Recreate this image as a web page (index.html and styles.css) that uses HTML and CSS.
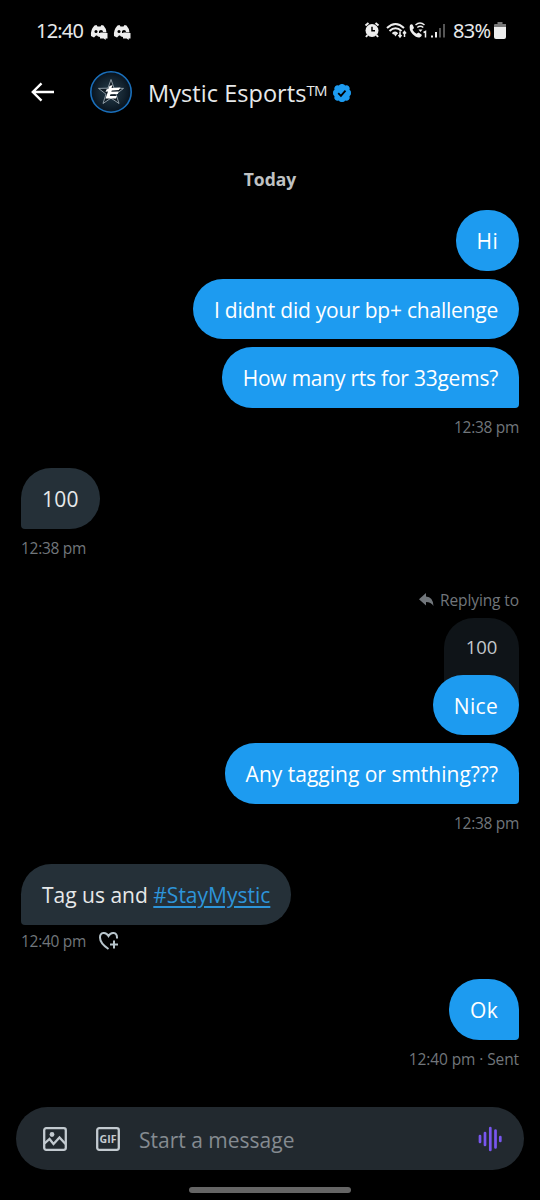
FILE: index.html
```html
<!DOCTYPE html>
<html lang="en">
<head>
<meta charset="utf-8">
<title>Mystic Esports</title>
<link rel="stylesheet" href="styles.css">
</head>
<body>
<div class="screen">
  <div class="status">
    <span class="clock">12:40</span>
    <svg class="discord" viewBox="0 0 18 16"><path d="M4.500 1.500 6.500 1l1 1.500h3L11.500 1l2 .5Q16 4 16.500 8.500H10V13l-2-.5-1-1H6L4 13.500 1 12Q.2 6 4.500 1.500Z"/><circle class="cut" cx="6" cy="7.500" r="1.500"/><path class="cut" d="M9 9V7.500Q9 6 11 6t2 2H10.300v1Z"/><path d="M10 9H17.500v5.500h-1.800v1.500L13.700 14.500H10Z"/></svg>
    <svg class="discord" viewBox="0 0 18 16"><path d="M4.500 1.500 6.500 1l1 1.500h3L11.500 1l2 .5Q16 4 16.500 8.500H10V13l-2-.5-1-1H6L4 13.500 1 12Q.2 6 4.500 1.500Z"/><circle class="cut" cx="6" cy="7.500" r="1.500"/><path class="cut" d="M9 9V7.500Q9 6 11 6t2 2H10.300v1Z"/><path d="M10 9H17.500v5.500h-1.800v1.500L13.700 14.500H10Z"/></svg>
    <svg class="signals" viewBox="0 0 84 18">
      <circle cx="8" cy="9.500" r="6.500"/><path class="line" d="M1.500 4.500 4.500 2M14.500 4.500l-3-2.500M3.500 14l-1.500 2M12.500 14l1.500 2"/><path class="hand" d="M8 5.800v4h3"/>
      <path class="line" d="M23 7q8.500-8 17 0M25.500 10q6-5.500 12 0M28.500 12.800q3-2.300 5 0"/><path d="m29.500 12.500 4 0-2 3Z"/><path class="thin" d="M36 10.500v5m-1.500-1.500 1.500 2 1.500-2M40.500 16v-5M39 12.500l1.500-2 1.500 2"/>
      <path d="M46 4q2-1.700 3 .5l1 2.500-1.500 1.700q1.200 2.500 4 4l2-1.200 3 2q1 1.500-2 3-3 .5-7-3.500-4-4.500-2.500-9Z"/><path class="thin" d="M51.500 4q4.500-4 9 0M53.300 6.500q3-2.500 6 0"/><path d="m54.500 8.500h4L56.500 11Z"/><path class="thin" d="m59.500 11.500 2-1v6"/>
      <path class="bar" d="M68 14.500v2M72 11v5.500"/><path class="bar dim" d="M76 7v9.500M80 3v13.500"/>
    </svg>
    <span class="percent">83%</span>
    <svg class="battery" viewBox="0 0 12 17"><path class="grey" d="M3.500 0h5v2H12v4H0V3q0-1 1-1h2.500Z"/><path d="M0 5h12v10q0 2-2 2H2q-2 0-2-2Z"/></svg>
  </div>
  <header class="header">
    <svg class="back" viewBox="0 0 24 20"><path d="M23 10H2M10.500 1.300 1.800 10l8.700 8.700"/></svg>
    <svg class="avatar" viewBox="0 0 42 42">
      <defs><radialGradient id="disc"><stop offset="0" stop-color="#263d4c"/><stop offset=".65" stop-color="#142430"/><stop offset="1" stop-color="#07131f"/></radialGradient></defs>
      <circle cx="21" cy="21" r="20.200" fill="url(#disc)" stroke="#1a6fbb" stroke-width="1.600"/>
      <path class="star" d="m21 8.500 3 8.700 9.500.2-7.500 5.800 3 9.300-8-5.400-8 5.400 3-9.300-7.500-5.800 9.500-.2Z"/>
      <path class="emblem" d="m19.500 15 3-1-1 3 9-.5-1.700 2.600-7 .3-.5 1.400 7.400-.4-1 2.600-7.200.3-.6 1.600 7 .1-1 2.500H15.500l2.500-7-2.500.3 1.200-2.600 1.500-.2Z"/>
    </svg>
    <h1 class="name">Mystic Esports<span class="tm">TM</span></h1>
    <svg class="verified" viewBox="0 0 20 20"><path d="M10 1a3.300 3.300 0 0 1 3.200 1.500 3.300 3.300 0 0 1 4.300 4.300A3.300 3.300 0 0 1 19 10a3.300 3.300 0 0 1-1.500 3.200 3.300 3.300 0 0 1-4.300 4.300A3.300 3.300 0 0 1 10 19a3.300 3.300 0 0 1-3.200-1.500 3.300 3.300 0 0 1-4.300-4.300A3.300 3.300 0 0 1 1 10a3.300 3.300 0 0 1 1.500-3.200 3.300 3.300 0 0 1 4.300-4.300A3.300 3.300 0 0 1 10 1Z"/><path class="check" d="m6.200 10.200 2.700 2.700 4.600-5.300"/></svg>
  </header>
  <main class="thread">
    <div class="day">Today</div>
    <section class="group sent">
      <p class="bubble short">Hi</p>
      <p class="bubble tight">I didnt did your bp+ challenge</p>
      <p class="bubble tight tail">How many rts for 33gems?</p>
      <div class="time">12:38 pm</div>
    </section>
    <section class="group received">
      <p class="bubble short tail">100</p>
      <div class="time">12:38 pm</div>
    </section>
    <section class="group sent reply-group">
      <div class="replying"><svg viewBox="0 0 15 14"><path d="M7 0v3.500q7 .3 7.500 9.500-2.500-4-7.500-4v3.500L0 6.200Z"/></svg><span>Replying to</span></div>
      <div class="quote">100</div>
      <p class="bubble short after-quote">Nice</p>
      <p class="bubble tail">Any tagging or smthing???</p>
      <div class="time">12:38 pm</div>
    </section>
    <section class="group received">
      <p class="bubble tail">Tag us and <a class="hashtag">#StayMystic</a></p>
      <div class="time compact"><span>12:40 pm</span><svg class="react" viewBox="0 0 22 20"><path d="M10.500 18C6 15 2 11 2 6.500 2 1 8 .5 10.500 5 13 .5 19 1 19 6.500v1M16 9.500v8M12 13.500h8"/></svg></div>
    </section>
    <section class="group sent">
      <p class="bubble short tail">Ok</p>
      <div class="time delivery">12:40 pm · Sent</div>
    </section>
  </main>
  <footer class="composer">
    <svg class="tool" viewBox="0 0 24 24"><rect class="frame" x="1.200" y="1.200" width="21.600" height="21.600" rx="2"/><circle cx="9" cy="7.500" r="2.400"/><path class="frame" d="m1.500 16.500 5-4.500 4 5 6-6.500 6 6.500"/></svg>
    <svg class="tool" viewBox="0 0 24 24"><rect class="frame" x="1.200" y="1.200" width="21.600" height="21.600" rx="2"/><text class="gif" x="12" y="15.700" text-anchor="middle">GIF</text></svg>
    <span class="placeholder">Start a message</span>
    <svg class="voice" viewBox="0 0 24 26"><path d="M2 10v6M7 7v12M12.300 2v22M17.500 4.500v17M22.300 11v4"/></svg>
  </footer>
  <div class="handle"></div>
</div>
</body>
</html>
```
FILE: styles.css
```css
* { box-sizing: border-box; }
body { margin: 0; background: #000; color: #e7e9ea; font-family: "Open Sans", "Noto Sans", sans-serif; }
svg { display: block; flex: none; }
.screen { width: 540px; height: 1200px; display: flex; flex-direction: column; overflow: hidden; background: #000; }

.status { height: 60px; flex: none; display: flex; align-items: center; padding: 0 34px 0 36px; fill: #eee; font: 20px "Noto Sans", sans-serif; white-space: nowrap; }
.clock { width: 54px; letter-spacing: -.8px; }
.discord { width: 18px; height: 16px; margin: 3px 5px 0 0; }
.cut { fill: #000; }
.signals { width: 84px; height: 18px; margin-left: auto; }
.line { fill: none; stroke: #eee; stroke-width: 2; }
.thin { fill: none; stroke: #eee; stroke-width: 1.5; }
.hand { fill: none; stroke: #000; stroke-width: 1.5; }
.bar { stroke: #eee; stroke-width: 2; }
.dim { stroke: #555; }
.percent { width: 40px; margin-left: 5px; letter-spacing: -.7px; }
.battery { width: 12px; height: 17px; margin-left: 1px; }
.grey { fill: #777; }

.header { height: 64px; flex: none; display: flex; align-items: center; padding: 0 31px; }
.back { width: 24px; height: 20px; fill: none; stroke: #fff; stroke-width: 2.4; }
.avatar { width: 42px; height: 42px; margin-left: 35px; }
.star { fill: #101c26; stroke: #aab6bf; stroke-width: .8; }
.emblem { fill: #fff; }
.name { width: 179px; margin: 2px 0 0 16px; font-size: 23.5px; font-weight: 400; line-height: 30px; letter-spacing: .05px; white-space: nowrap; }
.tm { font-size: 15px; line-height: 0; vertical-align: 6px; letter-spacing: -.6px; }
.verified { width: 20px; height: 20px; margin: 2px 0 0 5px; fill: #1d9bf0; }
.check { fill: none; stroke: #000; stroke-width: 1.8; }

.thread { flex: 1; padding: 35px 21px 0; }
.day { height: 40px; line-height: 40px; margin-bottom: 11px; text-align: center; color: #bfc1c2; font-size: 17.5px; font-weight: 700; }
.group { display: flex; flex-direction: column; gap: 8px; margin-bottom: 21.5px; align-items: flex-start; }
.sent { align-items: flex-end; }
.bubble { margin: 0; height: 60.5px; padding: 2px 21px 0; border-radius: 30.25px; line-height: 58.5px; font-size: 21px; white-space: nowrap; background: #253038; }
.tight { letter-spacing: -.23px; }
.short { letter-spacing: .3px; }
.sent .bubble { background: #1d9bf0; color: #fff; }
.sent .tail { border-bottom-right-radius: 4px; }
.received .tail { border-bottom-left-radius: 4px; }
.hashtag { color: #2d94d9; text-decoration: underline; text-decoration-thickness: 1.5px; text-underline-offset: 3px; }
.time { display: flex; height: 39px; margin-top: -8px; line-height: 39px; color: #71767b; font-size: 15.5px; letter-spacing: -.3px; white-space: nowrap; }
.delivery { letter-spacing: -.1px; }
.compact { height: 33px; line-height: 33px; gap: 12px; align-items: center; }
.react { width: 22px; height: 20px; margin-top: -1px; fill: none; stroke: #b8c5cc; stroke-width: 2; }
.reply-group { margin-top: -6px; }
.replying { display: flex; align-items: center; gap: 6px; height: 35px; padding-bottom: 1px; color: #71767b; font-size: 15.5px; letter-spacing: -.1px; }
.replying svg { width: 15px; height: 14px; fill: #71767b; }
.quote { width: 75px; height: 87px; margin-top: -8px; border-radius: 30px 30px 0 0; background: #0f1418; text-align: center; line-height: 58px; color: #c2c8cc; font-size: 18.5px; }
.sent .after-quote { margin-top: -38.5px; }

.composer { height: 63px; flex: none; margin: 0 16px; padding: 0 22px 0 27px; display: flex; align-items: center; border-radius: 32px; background: #22292f; }
.tool { width: 24px; height: 24px; margin-right: 29px; fill: #c3cad0; }
.frame { fill: none; stroke: #c3cad0; stroke-width: 2.3; }
.gif { font: 700 10.5px "Open Sans", sans-serif; }
.placeholder { flex: 1; margin: 3px 0 0 -10px; color: #858b91; font-size: 21px; }
.voice { width: 24px; height: 26px; fill: none; stroke: #7856ee; stroke-width: 2.7; stroke-linecap: round; }
.handle { width: 162px; height: 6px; flex: none; margin: 17px auto 7px; border-radius: 3px; background: #666; }
```
